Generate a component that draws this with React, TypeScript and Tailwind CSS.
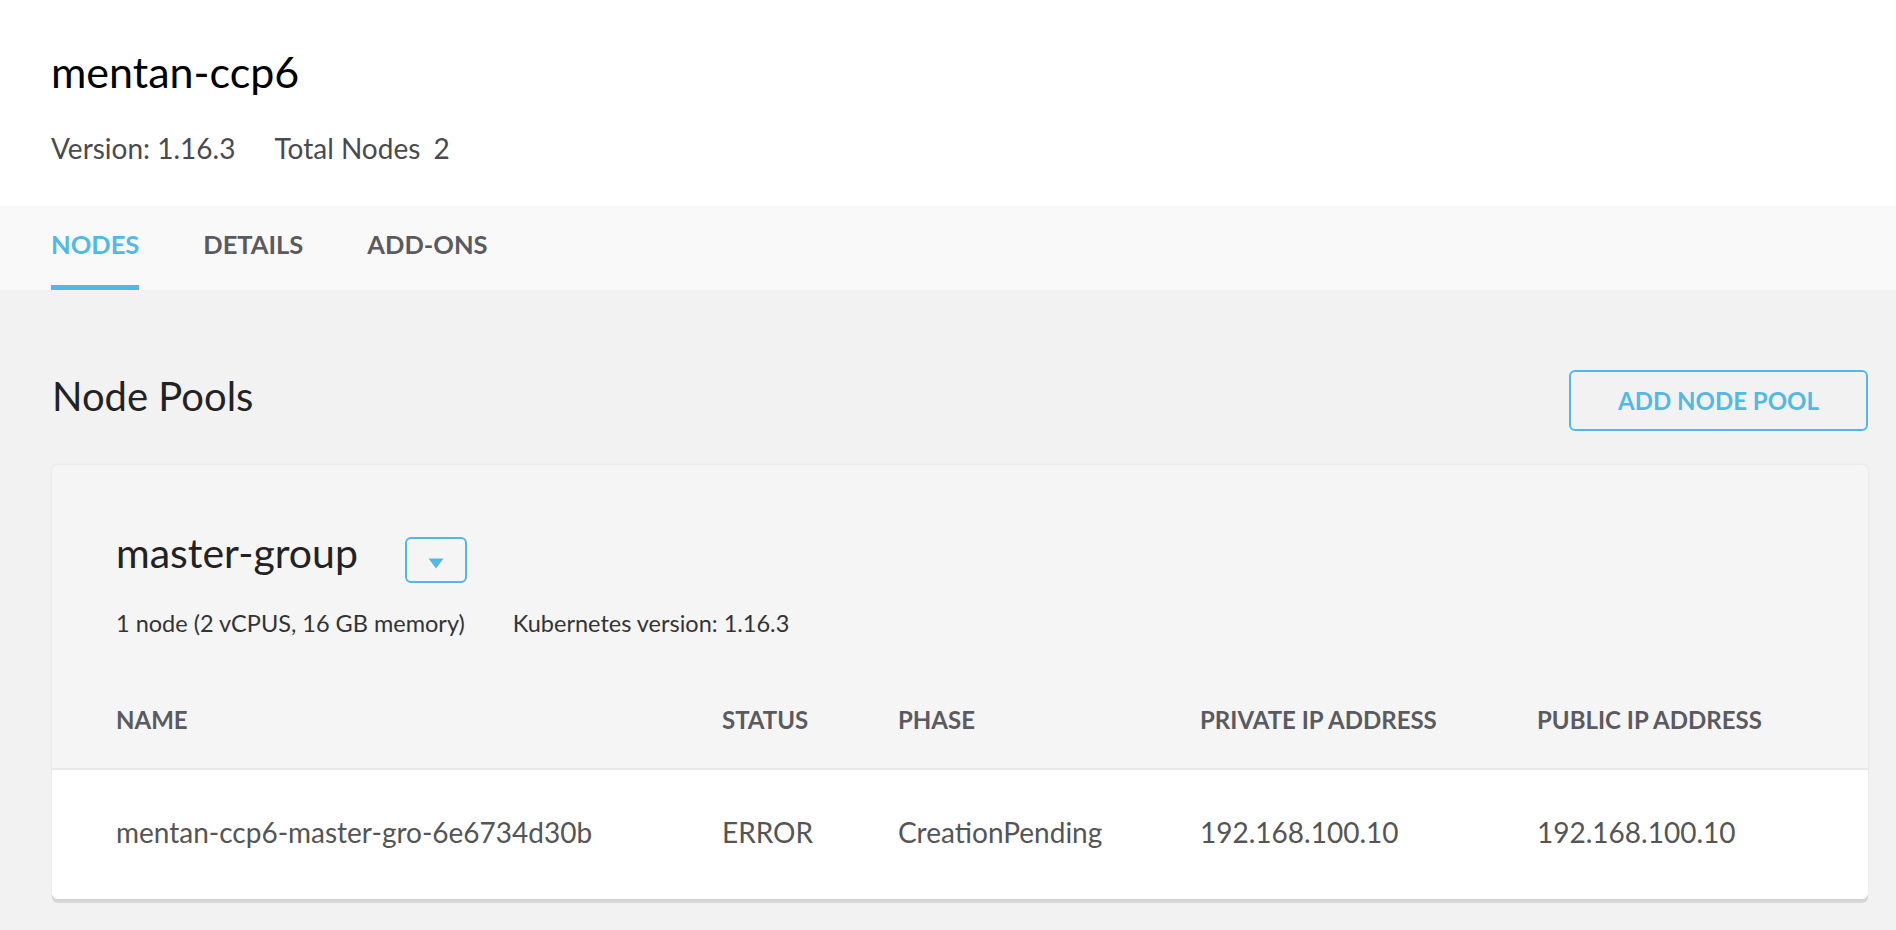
import React from "react";

const font = { fontFamily: "Lato, 'Open Sans', sans-serif" };

const columns = [
  { label: "NAME", w: "w-[606px]" },
  { label: "STATUS", w: "w-[176px]" },
  { label: "PHASE", w: "w-[302px]" },
  { label: "PRIVATE IP ADDRESS", w: "w-[337px]" },
  { label: "PUBLIC IP ADDRESS", w: "flex-1" },
];

const row = [
  "mentan-ccp6-master-gro-6e6734d30b",
  "ERROR",
  "CreationPending",
  "192.168.100.10",
  "192.168.100.10",
];

function Tabs() {
  return (
    <nav className="flex h-[84px] gap-16 bg-[#f9f9f9] pl-[51px]">
      <a className="flex h-full items-center border-b-[5px] border-[#52b9e6] pb-[3px] text-[25.5px] font-bold text-[#52b9e6]">
        NODES
      </a>
      <a className="flex h-full items-center pb-[8px] text-[25.5px] font-bold text-[#5a5a60]">DETAILS</a>
      <a className="flex h-full items-center pb-[8px] text-[25.5px] font-bold text-[#5a5a60]">ADD-ONS</a>
    </nav>
  );
}

function NodePool() {
  return (
    <section className="overflow-hidden rounded-md bg-[#f5f5f5] shadow-[0_0_3px_rgba(0,0,0,0.08),0_4px_0_#d8d8d8]">
      <div className="px-16 pt-[62px]">
        <div className="flex items-start gap-[47px]">
          <h3 className="text-[41px] leading-[51px] text-[#222]">master-group</h3>
          <button className="mt-[10px] flex h-[46px] w-[62px] items-center justify-center rounded-md border-2 border-[#52b9e6] pt-[6px]">
            <svg width="16" height="11" viewBox="0 0 16 11">
              <path d="M0.5 0.5h15L8 10.5z" fill="#52b9e6" />
            </svg>
          </button>
        </div>
        <div className="mt-[23px] flex gap-[48px] text-[23.5px] leading-[35px] text-[#333]">
          <span>1 node (2 vCPUS, 16 GB memory)</span>
          <span>Kubernetes version: 1.16.3</span>
        </div>
      </div>
      <div className="mt-[30px] flex h-[99px] items-center border-b-2 border-[#e8e8e8] px-16 text-[24px] font-bold text-[#5a5a60]">
        {columns.map((c) => (
          <div key={c.label} className={c.w}>
            {c.label}
          </div>
        ))}
      </div>
      <div className="flex h-[129px] items-center bg-white px-16 pb-[6px] text-[28px] text-[#555]">
        {row.map((v, i) => (
          <div key={i} className={columns[i].w}>
            {v}
          </div>
        ))}
      </div>
    </section>
  );
}

export default function App() {
  return (
    <div className="min-h-[930px] bg-[#f2f2f2]" style={font}>
      <header className="h-[206px] bg-white pl-[51px] pt-[46px]">
        <h1 className="text-[43px] leading-[1.2] text-black">mentan-ccp6</h1>
        <p className="mt-[34px] flex gap-[39px] text-[28px] leading-[1.2] text-[#4a4a4e]">
          <span>Version: 1.16.3</span>
          <span>
            Total Nodes <span className="ml-[6px]">2</span>
          </span>
        </p>
      </header>
      <Tabs />
      <main className="pb-8 pl-[52px] pr-[28px] pt-[80px]">
        <div className="flex items-center justify-between">
          <h2 className="mb-[9px] text-[40px] leading-[48px] text-[#222]">Node Pools</h2>
          <button className="h-[61px] w-[299px] rounded-md border-2 border-[#52b9e6] text-[24px] font-bold text-[#52b9e6]">
            ADD NODE POOL
          </button>
        </div>
        <div className="mt-[34px]">
          <NodePool />
        </div>
      </main>
    </div>
  );
}
